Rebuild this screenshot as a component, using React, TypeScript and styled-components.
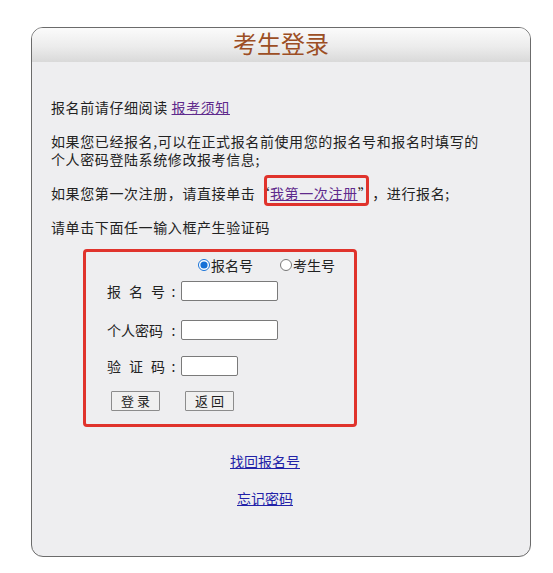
import React, { useState } from 'react'
import styled, { createGlobalStyle } from 'styled-components'

const GlobalStyle = createGlobalStyle`
  html, body {
    margin: 0;
    padding: 0;
    background: #ffffff;
  }
  body {
    font-family: "Noto Sans CJK SC", "Noto Sans", sans-serif;
    color: #222222;
    text-spacing-trim: space-all;
  }
`

type IdType = 'bmh' | 'ksh'

const App: React.FC = () => {
  const [idType, setIdType] = useState<IdType>('bmh')

  return (
    <>
      <GlobalStyle />
      <Panel>
        <Header>
          <Title>考生登录</Title>
        </Header>
        <Content>
          <Notice>
            <Para>
              报名前请仔细阅读 <VisitedLink href="#">报考须知</VisitedLink>
            </Para>
            <Para>
              如果您已经报名,可以在正式报名前使用您的报名号和报名时填写的
              <br />
              个人密码登陆系统修改报考信息;
            </Para>
            <Para>
              如果您第一次注册，请直接单击
              <Marked>
                “<VisitedLink href="#">我第一次注册</VisitedLink>”
              </Marked>
              ，进行报名;
            </Para>
            <Para>请单击下面任一输入框产生验证码</Para>
          </Notice>

          <LoginBox>
            <RadioRow>
              <RadioLabel>
                <Radio
                  type="radio"
                  name="idType"
                  checked={idType === 'bmh'}
                  onChange={() => setIdType('bmh')}
                />
                报名号
              </RadioLabel>
              <RadioLabel>
                <Radio
                  type="radio"
                  name="idType"
                  checked={idType === 'ksh'}
                  onChange={() => setIdType('ksh')}
                />
                考生号
              </RadioLabel>
            </RadioRow>

            <FieldRow $gap={7}>
              <FieldLabel $spread>报名号</FieldLabel>
              <Colon>:</Colon>
              <TextInput $width={97} />
            </FieldRow>
            <FieldRow $gap={19}>
              <FieldLabel>个人密码</FieldLabel>
              <Colon>:</Colon>
              <TextInput type="password" $width={97} />
            </FieldRow>
            <FieldRow $gap={16}>
              <FieldLabel $spread>验证码</FieldLabel>
              <Colon>:</Colon>
              <TextInput $width={57} />
            </FieldRow>

            <ButtonRow>
              <Button type="button">登录</Button>
              <Button type="button">返回</Button>
            </ButtonRow>
          </LoginBox>

          <LinkList>
            <PlainLink href="#">找回报名号</PlainLink>
            <PlainLink href="#">忘记密码</PlainLink>
          </LinkList>
        </Content>
      </Panel>
    </>
  )
}

export default App

const Panel = styled.div`
  width: 500px;
  height: 530px;
  margin: 27px 0 0 31px;
  box-sizing: border-box;
  border: 1px solid #6b6b6b;
  border-radius: 12px;
  background: #eeeef0;
`

const Header = styled.div`
  height: 34px;
  border-radius: 11px 11px 0 0;
  background: linear-gradient(to bottom, #fbfbfb 0%, #ececec 55%, #d9d9d9 100%);
  text-align: center;
`

const Title = styled.h1`
  margin: 0;
  padding-top: 1px;
  font-size: 24px;
  line-height: 28px;
  font-weight: 400;
  color: #9c4e24;
`

const Content = styled.div`
  padding: 36px 0 0 19px;
  font-size: 14px;
  line-height: 18px;
`

const Notice = styled.div`
  display: flex;
  flex-direction: column;
  gap: 16px;
  letter-spacing: 0.6px;
`

const Para = styled.p`
  margin: 0;
`

const VisitedLink = styled.a`
  color: #5f2a8c;
  text-decoration: underline;
`

const Marked = styled.span`
  position: relative;
  font-variant-east-asian: full-width;

  &::after {
    content: '';
    position: absolute;
    top: -8px;
    bottom: -3px;
    left: 9px;
    right: 3px;
    border: 3px solid #e0332c;
    border-radius: 4px;
    pointer-events: none;
  }
`

const LoginBox = styled.div`
  width: 274px;
  height: 178px;
  margin: 13px 0 0 32px;
  box-sizing: border-box;
  border: 3px solid #e0332c;
  border-radius: 4px;
  padding-top: 4px;
  font-size: 14px;
`

const RadioRow = styled.div`
  display: flex;
  align-items: center;
  gap: 27px;
  height: 18px;
  padding-left: 112px;
`

const RadioLabel = styled.label`
  display: flex;
  align-items: center;
  line-height: 18px;
`

const Radio = styled.input`
  width: 12px;
  height: 12px;
  margin: 0 1px 0 0;
  accent-color: #1570d6;
`

const FieldRow = styled.div<{ $gap: number }>`
  display: flex;
  align-items: center;
  height: 20px;
  margin-top: ${p => p.$gap}px;
  padding-left: 21px;
`

const FieldLabel = styled.span<{ $spread?: boolean }>`
  width: 62px;
  white-space: nowrap;
  letter-spacing: ${p => (p.$spread ? '8px' : '0')};
  line-height: 20px;
`

const Colon = styled.span`
  width: 9px;
  text-align: center;
  line-height: 20px;
`

const TextInput = styled.input<{ $width: number }>`
  width: ${p => p.$width}px;
  height: 20px;
  box-sizing: border-box;
  margin: 0 0 0 3px;
  padding: 0 3px;
  border: 1px solid #7a7a7a;
  border-radius: 2px;
  background: #ffffff;
  font-size: 13px;
  outline: none;
`

const ButtonRow = styled.div`
  display: flex;
  gap: 25px;
  margin-top: 15px;
  padding-left: 25px;
`

const Button = styled.button`
  width: 49px;
  height: 20px;
  padding: 0 0 0 3px;
  box-sizing: border-box;
  border: 1px solid #8c8c8c;
  border-radius: 1px;
  background: #f0f0f0;
  font-family: "Noto Sans CJK SC", sans-serif;
  font-size: 13px;
  line-height: 18px;
  letter-spacing: 3px;
  color: #222222;
`

const LinkList = styled.div`
  display: flex;
  flex-direction: column;
  align-items: center;
  gap: 19px;
  width: 428px;
  margin-top: 25px;
  font-size: 14px;
`

const PlainLink = styled.a`
  color: #2222a8;
  text-decoration: underline;
  line-height: 18px;
`
